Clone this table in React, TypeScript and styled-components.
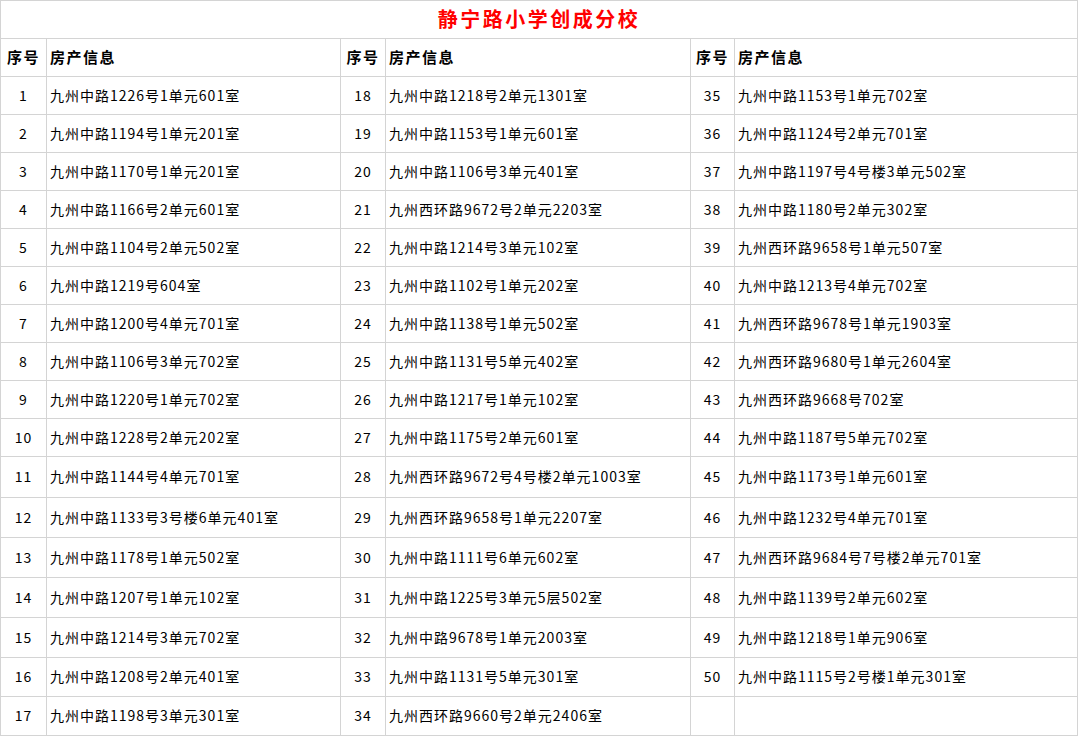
import React from 'react';
import styled, { createGlobalStyle } from 'styled-components';

const GlobalStyle = createGlobalStyle`
  html, body {
    margin: 0;
    padding: 0;
    background: #ffffff;
  }
  body {
    font-family: "Noto Sans CJK SC", "Noto Sans", sans-serif;
    color: #000000;
  }
`;

const lineColor = '#d4d4d4';

// sheet: grid lines come from the 1px gaps over a grey background
const Sheet = styled.div`
  display: grid;
  width: 1078px;
  box-sizing: border-box;
  grid-template-columns: 45px 293px 44px 304px 43px 342px;
  grid-template-rows:
    37px 37px repeat(10, 37px) 40px 39px 39px 39px 39px 38px 38px;
  gap: 1px;
  padding: 1px;
  background: ${lineColor};
`;

const TitleCell = styled.div`
  grid-column: 1 / -1;
  background: #ffffff;
  display: flex;
  align-items: center;
  justify-content: center;
  padding-bottom: 2px;
  color: #ff0000;
  font-size: 20px;
  font-weight: 700;
  letter-spacing: 2.5px;
`;

const Cell = styled.div<{ $center?: boolean; $head?: boolean }>`
  background: #ffffff;
  display: flex;
  align-items: center;
  justify-content: ${(p) => (p.$center ? 'center' : 'flex-start')};
  padding-left: ${(p) => (p.$center ? '0' : '3px')};
  padding-bottom: 2px;
  font-size: ${(p) => (p.$head ? '15px' : '14px')};
  font-weight: ${(p) => (p.$head ? 700 : 400)};
  letter-spacing: ${(p) => (p.$head ? '1.5px' : '1px')};
  white-space: nowrap;
  overflow: hidden;
`;

const groupA = [
  '九州中路1226号1单元601室',
  '九州中路1194号1单元201室',
  '九州中路1170号1单元201室',
  '九州中路1166号2单元601室',
  '九州中路1104号2单元502室',
  '九州中路1219号604室',
  '九州中路1200号4单元701室',
  '九州中路1106号3单元702室',
  '九州中路1220号1单元702室',
  '九州中路1228号2单元202室',
  '九州中路1144号4单元701室',
  '九州中路1133号3号楼6单元401室',
  '九州中路1178号1单元502室',
  '九州中路1207号1单元102室',
  '九州中路1214号3单元702室',
  '九州中路1208号2单元401室',
  '九州中路1198号3单元301室',
];

const groupB = [
  '九州中路1218号2单元1301室',
  '九州中路1153号1单元601室',
  '九州中路1106号3单元401室',
  '九州西环路9672号2单元2203室',
  '九州中路1214号3单元102室',
  '九州中路1102号1单元202室',
  '九州中路1138号1单元502室',
  '九州中路1131号5单元402室',
  '九州中路1217号1单元102室',
  '九州中路1175号2单元601室',
  '九州西环路9672号4号楼2单元1003室',
  '九州西环路9658号1单元2207室',
  '九州中路1111号6单元602室',
  '九州中路1225号3单元5层502室',
  '九州中路9678号1单元2003室',
  '九州中路1131号5单元301室',
  '九州西环路9660号2单元2406室',
];

const groupC = [
  '九州中路1153号1单元702室',
  '九州中路1124号2单元701室',
  '九州中路1197号4号楼3单元502室',
  '九州中路1180号2单元302室',
  '九州西环路9658号1单元507室',
  '九州中路1213号4单元702室',
  '九州西环路9678号1单元1903室',
  '九州西环路9680号1单元2604室',
  '九州西环路9668号702室',
  '九州中路1187号5单元702室',
  '九州中路1173号1单元601室',
  '九州中路1232号4单元701室',
  '九州西环路9684号7号楼2单元701室',
  '九州中路1139号2单元602室',
  '九州中路1218号1单元906室',
  '九州中路1115号2号楼1单元301室',
];

const groups = [
  { start: 1, items: groupA },
  { start: 18, items: groupB },
  { start: 35, items: groupC },
];

function App(): JSX.Element {
  const rows = Array.from({ length: 17 }, (_, i) => i);
  return (
    <>
      <GlobalStyle />
      <Sheet>
        <TitleCell>静宁路小学创成分校</TitleCell>
        {groups.map((g) => (
          <React.Fragment key={`h${g.start}`}>
            <Cell $center $head>
              序号
            </Cell>
            <Cell $head>房产信息</Cell>
          </React.Fragment>
        ))}
        {rows.map((r) =>
          groups.map((g) => {
            const text = g.items[r];
            return (
              <React.Fragment key={`${g.start}-${r}`}>
                <Cell $center>{text ? g.start + r : ''}</Cell>
                <Cell>{text ?? ''}</Cell>
              </React.Fragment>
            );
          })
        )}
      </Sheet>
    </>
  );
}

export default App;
